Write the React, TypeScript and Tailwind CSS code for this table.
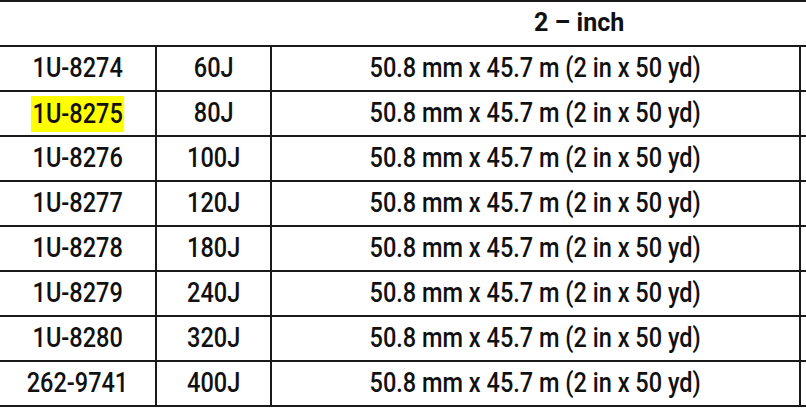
import React from 'react';

const rows = [
  { part: '1U-8274', grade: '60J' },
  { part: '1U-8275', grade: '80J', highlight: true },
  { part: '1U-8276', grade: '100J' },
  { part: '1U-8277', grade: '120J' },
  { part: '1U-8278', grade: '180J' },
  { part: '1U-8279', grade: '240J' },
  { part: '1U-8280', grade: '320J' },
  { part: '262-9741', grade: '400J' },
];

const size = '50.8 mm x 45.7 m (2 in x 50 yd)';

// the source uses a condensed face; squeeze Roboto to match
function Narrow({ children, mark }: { children: React.ReactNode; mark?: boolean }) {
  return (
    <span
      className={
        'inline-block scale-x-[0.84] text-[28px] font-medium leading-none ' +
        (mark ? 'bg-[#ffff00] px-[2px] py-[4px]' : '')
      }
    >
      {children}
    </span>
  );
}

export default function App() {
  return (
    <div
      className="w-[806px] h-[412px] bg-white text-[#111] overflow-hidden"
      style={{ fontFamily: 'Roboto, "Liberation Sans", Arial, sans-serif' }}
    >
      <table className="border-collapse w-[806px] table-fixed">
        <colgroup>
          <col className="w-[156px]" />
          <col className="w-[115px]" />
          <col className="w-[529px]" />
          <col className="w-[6px]" />
        </colgroup>
        <tbody>
          <tr className="h-[45px]">
            <td colSpan={4} className="border-t-2 border-b-2 border-[#1a1a1a] p-0 pl-[534px] text-left align-middle">
              <span className="inline-block text-[25px] font-bold leading-none">2 – inch</span>
            </td>
          </tr>
          {rows.map((r) => (
            <tr key={r.part} className="h-[45px]">
              <td className="border-b-2 border-r-2 border-[#1a1a1a] p-0 text-center align-middle">
                <Narrow mark={r.highlight}>{r.part}</Narrow>
              </td>
              <td className="border-b-2 border-r-2 border-[#1a1a1a] p-0 text-center align-middle">
                <Narrow>{r.grade}</Narrow>
              </td>
              <td className="border-b-2 border-r-2 border-[#1a1a1a] p-0 text-center align-middle">
                <Narrow>{size}</Narrow>
              </td>
              <td className="border-b-2 border-[#1a1a1a] p-0"></td>
            </tr>
          ))}
        </tbody>
      </table>
    </div>
  );
}
